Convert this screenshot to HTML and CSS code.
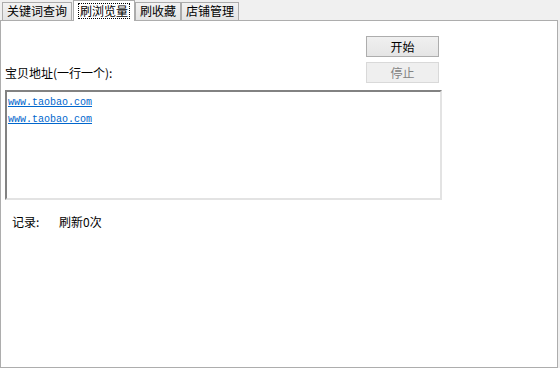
FILE: index.html
```html
<!DOCTYPE html>
<html lang="zh-CN">
<head>
    <meta charset="UTF-8">
    <title>刷浏览量</title>
    <link rel="stylesheet" href="styles.css">
</head>
<body>
    <div class="tabs">
        <div class="tab">关键词查询</div>
        <div class="tab active"><span class="focus">刷浏览量</span></div>
        <div class="tab">刷收藏</div>
        <div class="tab">店铺管理</div>
    </div>
    <div class="panel">
        <div class="top">
            <div class="label">宝贝地址(一行一个):</div>
            <div class="buttons">
                <button class="btn">开始</button>
                <button class="btn" disabled>停止</button>
            </div>
        </div>
        <div class="urls">
            <a href="#">www.taobao.com</a>
            <a href="#">www.taobao.com</a>
        </div>
        <div class="record">
            <span class="rec-label">记录:</span>
            <span>刷新0次</span>
        </div>
    </div>
</body>
</html>
```

FILE: styles.css
```css
body {
    margin: 0;
    background: #f0f0f0;
    font-family: "Noto Sans CJK SC", "DejaVu Sans", sans-serif;
    font-size: 12px;
    color: #000;
}
.tabs {
    display: flex;
    align-items: flex-end;
    height: 20px;
    padding-left: 2px;
}
.tab {
    box-sizing: border-box;
    height: 18px;
    line-height: 16px;
    padding: 0 4px;
    border: 1px solid #acacac;
    border-bottom: none;
    background: linear-gradient(#f2f2f2, #e4e4e4);
}
.tab.active {
    height: 21px;
    margin: 0 0 -1px 1px;
    padding: 2px 4px 0;
    background: #fff;
    position: relative;
    z-index: 1;
}
.focus {
    display: block;
    line-height: 14px;
    padding: 0 1px;
    border: 1px dotted #000;
}
.panel {
    box-sizing: border-box;
    width: 558px;
    height: 348px;
    border: 1px solid #adadad;
    background: #fff;
    padding: 15px 0 0 4px;
}
.top {
    width: 437px;
    display: flex;
    justify-content: space-between;
    align-items: flex-end;
}
.label {
    line-height: 21px;
}
.buttons {
    display: flex;
    flex-direction: column;
    gap: 5px;
    margin-right: 3px;
}
.btn {
    box-sizing: border-box;
    width: 73px;
    height: 21px;
    padding: 0;
    font: inherit;
    border: 1px solid #adadad;
    background: linear-gradient(#f0f0f0, #e5e5e5);
    color: #000;
}
.btn:disabled {
    border-color: #d9d9d9;
    background: #efefef;
    color: #838383;
}
.urls {
    box-sizing: border-box;
    width: 437px;
    height: 110px;
    margin-top: 7px;
    border: 2px solid;
    border-color: #828282 #e3e3e3 #e3e3e3 #828282;
    padding: 2px 1px;
    display: flex;
    flex-direction: column;
}
.urls a {
    font-family: "Liberation Mono", monospace;
    font-size: 10px;
    line-height: 17px;
    color: #0066cc;
    align-self: flex-start;
}
.record {
    display: flex;
    margin: 14px 0 0 7px;
    line-height: 16px;
}
.rec-label {
    width: 47px;
}
```
